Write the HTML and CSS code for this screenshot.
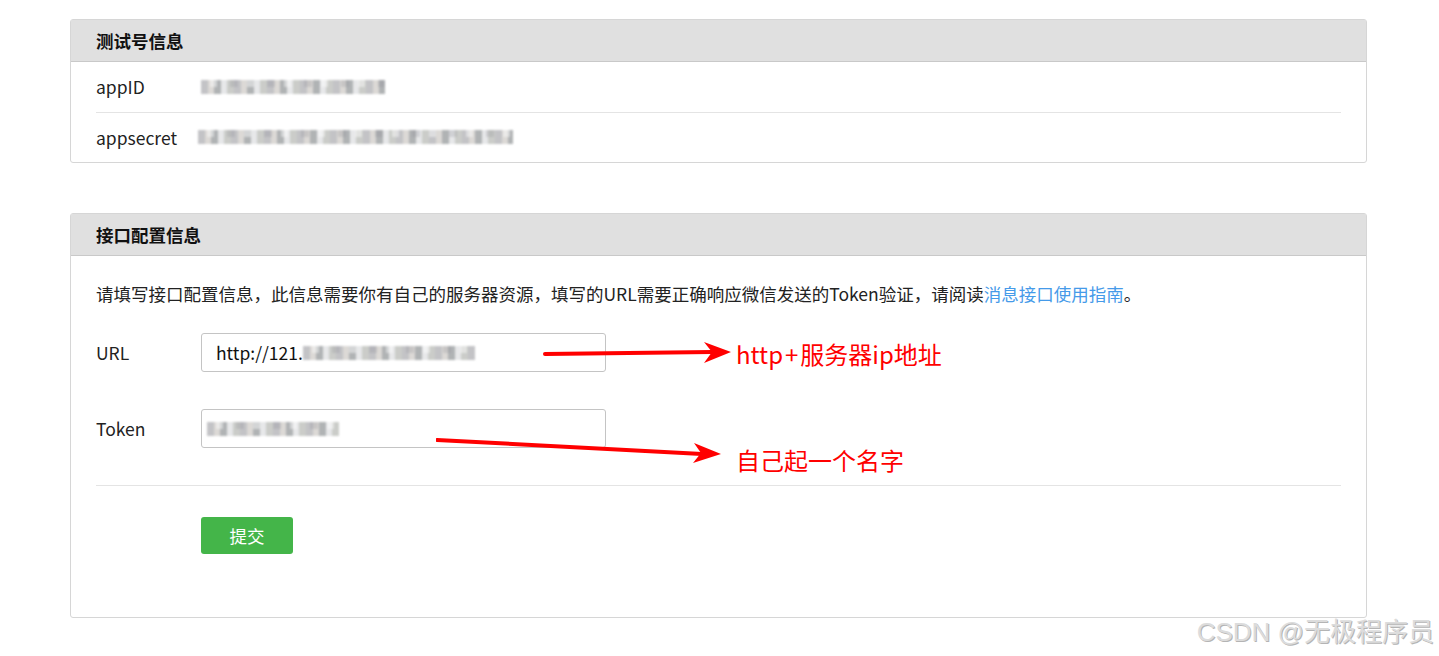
FILE: index.html
```html
<!DOCTYPE html>
<html>

<head>
    <meta charset="utf-8">
    <title>测试号管理</title>
    <link rel="stylesheet" href="styles.css">
</head>

<body>
    <div id="page">
        <section class="panel">
            <div class="panel-head">
                <h3>测试号信息</h3>
            </div>
            <div class="panel-body">
                <div class="info-row">
                    <span class="label">appID</span>
                    <span class="mosaic mosaic-id"></span>
                </div>
                <div class="info-row">
                    <span class="label">appsecret</span>
                    <span class="mosaic mosaic-secret"></span>
                </div>
            </div>
        </section>

        <section class="panel panel-config">
            <div class="panel-head">
                <h3>接口配置信息</h3>
            </div>
            <div class="panel-body">
                <p class="desc">请填写接口配置信息，此信息需要你有自己的服务器资源，填写的URL需要正确响应微信发送的Token验证，请阅读<a href="#">消息接口使用指南</a>。</p>
                <div class="form">
                    <label class="form-row">
                        <span class="label">URL</span>
                        <span class="input">http://121.<span class="mosaic mosaic-url"></span></span>
                    </label>
                    <label class="form-row">
                        <span class="label">Token</span>
                        <span class="input"><span class="mosaic mosaic-token"></span></span>
                    </label>
                </div>
                <div class="actions">
                    <button class="submit">提交</button>
                </div>
            </div>

            <!-- red annotations drawn over the screenshot -->
            <svg class="marks" width="420" height="140" viewBox="0 0 420 140">
                <path d="M109 22 L276 20" stroke="#f00" stroke-width="4" stroke-linecap="round" fill="none"/>
                <polygon points="268,10 295,20 268,31 276,20" fill="#f00"/>
                <path d="M1 108 L266 122" stroke="#f00" stroke-width="4" stroke-linecap="round" fill="none"/>
                <polygon points="258,111 285,122 257,131 265,121" fill="#f00"/>
            </svg>
            <span class="note note-url">http<span class="plus">+</span>服务器ip地址</span>
            <span class="note note-token">自己起一个名字</span>
        </section>
    </div>
    <div class="watermark">CSDN @无极程序员</div>
</body>

</html>
```
FILE: styles.css
```css
* {
    box-sizing: border-box;
    margin: 0px;
    padding: 0px;
}

body {
    font-family: "Noto Sans CJK SC", "Microsoft YaHei", sans-serif;
    font-size: 17.5px;
    color: #222;
    background: #fff;
    width: 1439px;
    height: 656px;
    overflow: hidden;
    position: relative;
}

#page {
    padding: 19px 72px 0px 70px;
    display: flex;
    flex-direction: column;
    gap: 50px;
}

.panel {
    border: 1px solid #d6d6d6;
    border-radius: 3px;
    position: relative;
}

.panel-head {
    height: 42px;
    background: #e0e0e0;
    border-bottom: 1px solid #c9c9c9;
    padding: 0px 25px;
    display: flex;
    align-items: center;
}

.panel-head h3 {
    font-size: 17.5px;
    font-weight: bold;
    color: #111;
}

.panel-body {
    padding: 0px 25px;
}

.info-row {
    height: 50px;
    display: flex;
    align-items: center;
    padding-bottom: 1px;
}

.info-row + .info-row {
    border-top: 1px solid #e4e4e4;
}

.label {
    width: 105px;
    flex-shrink: 0;
}

.mosaic {
    display: inline-block;
    height: 14px;
    background-image:
        repeating-linear-gradient(90deg, transparent 0px, transparent 9px, rgba(255,255,255,0.45) 9px, rgba(255,255,255,0.45) 16px, transparent 16px, transparent 29px, rgba(120,120,130,0.25) 29px, rgba(120,120,130,0.25) 37px),
        repeating-linear-gradient(90deg, #b9b9bd 0px, #b9b9bd 7px, #d6d3cf 7px, #d6d3cf 13px, #a3a6a8 13px, #a3a6a8 20px, #e3e4e6 20px, #e3e4e6 26px, #c2c4c0 26px, #c2c4c0 33px);
    background-size: 100% 50%, 100% 100%;
    background-repeat: no-repeat, repeat;
    filter: blur(0.8px);
    opacity: 0.85;
    vertical-align: middle;
}

.mosaic-id {
    width: 184px;
}

.mosaic-secret {
    width: 315px;
    margin-left: -3px;
}

.mosaic-url {
    width: 172px;
}

.mosaic-token {
    width: 132px;
    margin-left: -9px;
}

.desc {
    padding-top: 25px;
    line-height: 26px;
}

.desc a {
    color: #459ae9;
    text-decoration: none;
}

.form {
    padding-top: 26px;
    display: flex;
    flex-direction: column;
    gap: 37px;
    padding-bottom: 37px;
    border-bottom: 1px solid #e4e4e4;
}

.form-row {
    display: flex;
    align-items: center;
}

.input {
    width: 405px;
    height: 39px;
    border: 1px solid #c4c4c4;
    border-radius: 3px;
    padding: 0px 14px;
    display: flex;
    align-items: center;
    color: #111;
    white-space: nowrap;
}

.actions {
    padding: 31px 0px 63px 105px;
}

.submit {
    width: 92px;
    height: 37px;
    border: none;
    border-radius: 3px;
    background: #44b549;
    color: #fff;
    font-family: "Noto Sans CJK SC", sans-serif;
    font-size: 17.5px;
}

.marks {
    position: absolute;
    left: 365px;
    top: 118px;
}

.note {
    position: absolute;
    color: #f00;
    font-size: 24px;
    white-space: nowrap;
}

.plus {
    padding: 0px 2px;
}

.note-url {
    left: 665px;
    top: 122px;
}

.note-token {
    left: 665px;
    top: 228px;
}

.watermark {
    position: absolute;
    right: 5px;
    bottom: 8px;
    font-family: "Liberation Sans", "Noto Sans CJK SC", sans-serif;
    font-size: 26px;
    color: #dcdcdc;
    text-shadow: 1px 1px 0px #b4b4b4;
}
```
